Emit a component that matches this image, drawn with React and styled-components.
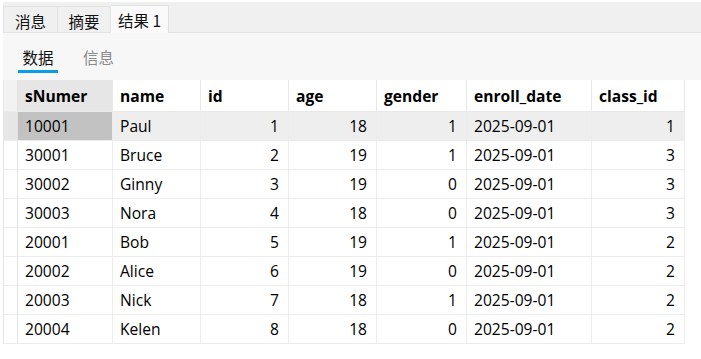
import React from 'react';
import styled, { createGlobalStyle } from 'styled-components';

const GlobalStyle = createGlobalStyle`
	html, body {
		margin: 0;
		padding: 0;
		background: #ffffff;
	}
	body {
		font-family: "Open Sans", "Noto Sans CJK SC", sans-serif;
		font-size: 15.6px;
		color: #000;
	}
`;

const COLUMNS = [
	{ key: 'sNumer', width: 95, align: 'left' },
	{ key: 'name', width: 88, align: 'left' },
	{ key: 'id', width: 88, align: 'right' },
	{ key: 'age', width: 88, align: 'right' },
	{ key: 'gender', width: 90, align: 'right' },
	{ key: 'enroll_date', width: 125, align: 'left' },
	{ key: 'class_id', width: 93, align: 'right' },
];

const ROWS = [
	['10001', 'Paul', 1, 18, 1, '2025-09-01', 1],
	['30001', 'Bruce', 2, 19, 1, '2025-09-01', 3],
	['30002', 'Ginny', 3, 19, 0, '2025-09-01', 3],
	['30003', 'Nora', 4, 18, 0, '2025-09-01', 3],
	['20001', 'Bob', 5, 19, 1, '2025-09-01', 2],
	['20002', 'Alice', 6, 19, 0, '2025-09-01', 2],
	['20003', 'Nick', 7, 18, 1, '2025-09-01', 2],
	['20004', 'Kelen', 8, 18, 0, '2025-09-01', 2],
];

const Page = styled.div`
	width: 701px;
	height: 359px;
	padding-left: 3px;
	padding-top: 2px;
	box-sizing: border-box;
	overflow: hidden;
	background: #ffffff;
`;

const TabBar = styled.div`
	height: 31px;
	display: flex;
	align-items: flex-end;
	background: #f0f0f0;
	border-bottom: 1px solid #e4e4e4;
	box-sizing: border-box;
`;

const Tab = styled.div`
	width: ${props => props.w}px;
	height: ${props => props.active ? '28px' : '26px'};
	display: flex;
	align-items: center;
	justify-content: center;
	box-sizing: border-box;
	white-space: nowrap;
	background: ${props => props.active ? '#fafafa' : '#f0f0f0'};
	border: 1px solid #e2e2e2;
	border-left: ${props => props.first ? '1px solid #e2e2e2' : 'none'};
	border-bottom: none;
	margin-bottom: ${props => props.active ? '-1px' : '0'};
	color: #111;
	font-family: "Noto Sans CJK SC", sans-serif;
	font-size: 15.5px;
	padding-top: ${props => props.active ? '0' : '2px'};
`;

const SubBar = styled.div`
	height: 47px;
	display: flex;
	align-items: flex-start;
	gap: 20px;
	padding-left: 15px;
	padding-top: 10px;
	box-sizing: border-box;
	background: #f7f7f7;
`;

const SubTab = styled.div`
	height: 30px;
	padding: 0 ${props => props.active ? '0' : '5px'};
	display: flex;
	align-items: center;
	justify-content: center;
	white-space: nowrap;
	font-family: "Noto Sans CJK SC", sans-serif;
	font-size: 15.5px;
	color: ${props => props.active ? '#111' : '#8a8a8a'};
	border-bottom: 3px solid ${props => props.active ? '#0a9ee6' : 'transparent'};
	width: ${props => props.active ? '40px' : 'auto'};
	box-sizing: border-box;
`;

const Grid = styled.div`
	display: grid;
	grid-template-columns: 14px ${COLUMNS.map(c => c.width + 'px').join(' ')};
	grid-auto-rows: 29px;
	grid-template-rows: 32px;
	width: max-content;
	border-left: 1px solid #e6e6e6;
`;

const Indicator = styled.div`
	background: ${props => props.selected ? '#e6e6e6' : props.header ? '#f2f2f2' : '#ffffff'};
	border-right: 1px solid #e3e3e3;
	border-bottom: 1px solid #ececec;
	box-sizing: border-box;
`;

const HeadCell = styled.div`
	display: flex;
	align-items: center;
	padding: 0 7px;
	box-sizing: border-box;
	font-weight: 700;
	background: ${props => props.selected ? '#e6e6e6' : '#ffffff'};
	border-right: 1px solid #e8e8e8;
	border-bottom: 1px solid #e8e8e8;
`;

const Cell = styled.div`
	display: flex;
	align-items: center;
	justify-content: ${props => props.align === 'right' ? 'flex-end' : 'flex-start'};
	padding: 0 ${props => props.align === 'right' ? '9px' : '7px'};
	box-sizing: border-box;
	white-space: nowrap;
	background: ${props => props.focused ? '#c2c2c2' : props.highlight ? '#eeeeee' : '#ffffff'};
	border-right: 1px solid #ececec;
	border-bottom: 1px solid #ececec;
`;

export default function App() {
	return (
		<Page>
			<GlobalStyle />
			<TabBar>
				<Tab first w={55}>消息</Tab>
				<Tab w={53}>摘要</Tab>
				<Tab active w={58}>结果 1</Tab>
			</TabBar>
			<SubBar>
				<SubTab active>数据</SubTab>
				<SubTab>信息</SubTab>
			</SubBar>
			<Grid>
				<Indicator header />
				{COLUMNS.map((c, i) => (
					<HeadCell key={c.key} selected={i === 0}>{c.key}</HeadCell>
				))}
				{ROWS.map((row, r) => (
					<React.Fragment key={r}>
						<Indicator selected={r === 0} />
						{row.map((v, i) => (
							<Cell
								key={i}
								align={COLUMNS[i].align}
								highlight={r === 0}
								focused={r === 0 && i === 0}
							>
								{v}
							</Cell>
						))}
					</React.Fragment>
				))}
			</Grid>
		</Page>
	);
}
